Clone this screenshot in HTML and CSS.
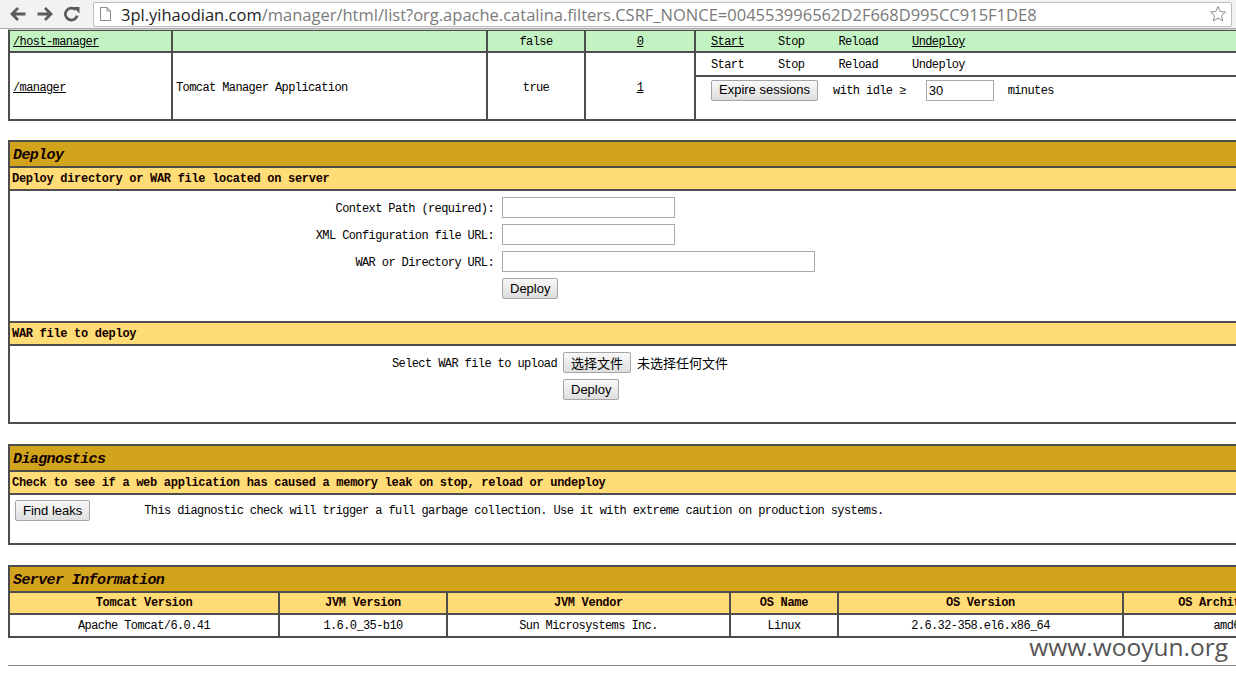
FILE: index.html
```html
<!DOCTYPE html>
<html lang="en">
<head>
<meta charset="utf-8">
<title>/manager</title>
<link rel="stylesheet" href="styles.css">
</head>
<body>
<div class="toolbar">
  <div class="nav">
    <svg class="navicon" width="18" height="16" viewBox="0 0 18 16"><path d="M16.5 8H3.5M9 2L3 8l6 6" stroke="#5b5b5b" stroke-width="2.8" fill="none"/></svg>
    <svg class="navicon" width="18" height="16" viewBox="0 0 18 16"><path d="M1.5 8h13M9 2l6 6-6 6" stroke="#5b5b5b" stroke-width="2.8" fill="none"/></svg>
    <svg class="navicon" width="18" height="16" viewBox="0 0 18 16"><path d="M14.2 9.6A6 6 0 1 1 12.6 3.8" stroke="#5b5b5b" stroke-width="2.7" fill="none"/><path d="M10 1h6.5v6.5z" fill="#5b5b5b"/></svg>
  </div>
  <div class="omnibox">
    <svg class="pageicon" width="13" height="16" viewBox="0 0 13 16"><path d="M1.5 1.5h6.5l3.5 3.5v9.5h-10z M8 1.5v3.5h3.5" stroke="#8a8a8a" stroke-width="1" fill="#fff"/></svg>
    <span class="url"><span class="host">3pl.yihaodian.com</span>/manager/html/list?org.apache.catalina.filters.CSRF_NONCE=004553996562D2F668D995CC915F1DE8</span>
    <svg class="star" width="18" height="18" viewBox="0 0 18 18"><path d="M9 1.5l2.2 5 5.3.5-4 3.6 1.2 5.3L9 13.1l-4.7 2.8 1.2-5.3-4-3.6 5.3-.5z" stroke="#8c8c8c" stroke-width="1" fill="none" stroke-linejoin="round"/></svg>
  </div>
</div>

<div class="page">
  <table class="grid apps">
    <colgroup><col class="a1"><col class="a2"><col class="a3"><col class="a4"><col></colgroup>
    <tr class="green">
      <td class="cell"><a class="lnk">/host-manager</a></td>
      <td class="cell"></td>
      <td class="cell center">false</td>
      <td class="cell center"><a class="lnk">0</a></td>
      <td class="cell cmds"><div class="cmdrow"><a class="lnk">Start</a><span>Stop</span><span>Reload</span><a class="lnk">Undeploy</a></div></td>
    </tr>
    <tr>
      <td class="cell span" rowspan="2"><a class="lnk">/manager</a></td>
      <td class="cell span" rowspan="2">Tomcat Manager Application</td>
      <td class="cell span center" rowspan="2">true</td>
      <td class="cell span center" rowspan="2"><a class="lnk">1</a></td>
      <td class="cell cmds tall"><div class="cmdrow"><span>Start</span><span>Stop</span><span>Reload</span><span>Undeploy</span></div></td>
    </tr>
    <tr>
      <td class="cell expire"><div class="expirerow"><button class="btn">Expire sessions</button><span class="idle">with idle ≥</span><input class="txt idlebox" value="30"><span class="mins">minutes</span></div></td>
    </tr>
  </table>

  <table class="grid box">
    <tr><td class="title">Deploy</td></tr>
    <tr><td class="subhead">Deploy directory or WAR file located on server</td></tr>
    <tr><td class="body deploybody">
      <div class="form">
        <span class="lbl">Context Path (required):</span><input class="txt">
        <span class="lbl">XML Configuration file URL:</span><input class="txt">
        <span class="lbl">WAR or Directory URL:</span><input class="txt wide">
        <span></span><button class="btn">Deploy</button>
      </div>
    </td></tr>
    <tr><td class="subhead">WAR file to deploy</td></tr>
    <tr><td class="body deploybody">
      <div class="form upload">
        <span class="lbl">Select WAR file to upload</span><span class="filepick"><button class="btn cjk">选择文件</button><span class="nofile">未选择任何文件</span></span>
        <span></span><button class="btn">Deploy</button>
      </div>
    </td></tr>
  </table>

  <table class="grid box">
    <tr><td class="title">Diagnostics</td></tr>
    <tr><td class="subhead">Check to see if a web application has caused a memory leak on stop, reload or undeploy</td></tr>
    <tr><td class="body diagbody">
      <div class="diagrow"><button class="btn">Find leaks</button><span class="diagtext">This diagnostic check will trigger a full garbage collection. Use it with extreme caution on production systems.</span></div>
    </td></tr>
  </table>

  <table class="grid box info">
    <colgroup><col class="s1"><col class="s2"><col class="s3"><col class="s4"><col class="s5"><col></colgroup>
    <tr><td class="title" colspan="6">Server Information</td></tr>
    <tr class="heads">
      <td>Tomcat Version</td><td>JVM Version</td><td>JVM Vendor</td><td>OS Name</td><td>OS Version</td><td>OS Architecture</td>
    </tr>
    <tr class="vals">
      <td>Apache Tomcat/6.0.41</td><td>1.6.0_35-b10</td><td>Sun Microsystems Inc.</td><td>Linux</td><td>2.6.32-358.el6.x86_64</td><td>amd64</td>
    </tr>
  </table>

  <hr class="rule">
</div>

<div class="watermark">www.wooyun.org</div>
</body>
</html>
```

FILE: styles.css
```css
html, body {
  margin: 0;
  padding: 0;
  overflow: hidden;
  background: #fff;
}

body {
  font-family: "Liberation Mono", "Noto Sans CJK SC", monospace;
  font-size: 12px;
  letter-spacing: -0.6px;
  color: #000;
}

/* ---------- browser toolbar ---------- */
.toolbar {
  height: 28px;
  border-bottom: 1px solid #a9a9a9;
  background: #f2f2f2;
  display: flex;
  align-items: center;
  letter-spacing: 0;
}

.nav {
  width: 93px;
  display: flex;
  align-items: center;
  padding-left: 9px;
  box-sizing: border-box;
  gap: 9px;
}

.navicon {
  display: block;
}

.omnibox {
  flex: 1;
  margin-right: 4px;
  height: 25px;
  box-sizing: border-box;
  border: 1px solid #bdbdbd;
  border-radius: 2px;
  background: #fff;
  display: flex;
  align-items: center;
  padding-left: 5px;
  padding-right: 4px;
}

.pageicon {
  display: block;
  flex: none;
}

.url {
  flex: 1;
  margin-left: 9px;
  font-family: "Open Sans", "Noto Sans", sans-serif;
  font-size: 16.5px;
  color: #7a7a7a;
  white-space: nowrap;
  letter-spacing: 0;
}

.host {
  color: #1e1e1e;
}

.star {
  display: block;
  flex: none;
}

/* ---------- page ---------- */
.page {
  width: 1330px;
  padding: 0 8px;
}

.grid {
  width: 100%;
  table-layout: fixed;
  border-collapse: separate;
  border-spacing: 0;
  border: 1px solid #4d4d4d;
}

.grid td {
  border: 1px solid #4d4d4d;
  padding: 0;
  vertical-align: middle;
}

.lnk {
  color: #000;
  text-decoration: underline;
}

.center {
  text-align: center;
}

/* applications table */
.apps {
  border-top-color: #cfcfcf;
}

.apps .a1 { width: 163px; }
.apps .a2 { width: 315px; }
.apps .a3 { width: 98px; }
.apps .a4 { width: 110px; }

.apps .cell {
  padding: 4px 3px 2px;
  line-height: 14px;
}

.apps .cell.span {
  padding-top: 5px;
  padding-bottom: 1px;
}

.green td {
  background: #c3f3c3;
}

.apps .cmds {
  padding-left: 15px;
}

.apps .cmds.tall {
  padding-top: 5px;
  padding-bottom: 3px;
}

.cmdrow {
  display: flex;
  gap: 34px;
}

.apps .expire {
  padding: 3px 0 19px 15px;
}

.expirerow {
  display: flex;
  align-items: center;
  height: 20px;
}

.idle {
  margin-left: 15px;
  padding-top: 1px;
}

.mins {
  margin-left: 14px;
  padding-top: 1px;
}

/* ---------- buttons / inputs ---------- */
.btn {
  height: 21px;
  box-sizing: border-box;
  padding: 0 7px;
  border: 1px solid #a5a5a5;
  border-radius: 2px;
  background: linear-gradient(#f8f8f8, #dedede);
  font-family: "Liberation Sans", Arial, sans-serif;
  font-size: 13px;
  line-height: 18px;
  color: #000;
  letter-spacing: 0;
  margin: 0;
}

.btn.cjk {
  font-family: "Noto Sans CJK SC", sans-serif;
  padding: 0 7px;
}

.txt {
  display: block;
  width: 173px;
  height: 21px;
  box-sizing: border-box;
  border: 1px solid #a9a9a9;
  padding: 1px 2px;
  margin: 0;
  font-family: "Liberation Sans", Arial, sans-serif;
  font-size: 13px;
  letter-spacing: 0;
  background: #fff;
}

.txt.wide {
  width: 313px;
}

.txt.idlebox {
  margin-left: 20px;
  width: 68px;
  height: 21px;
}

/* ---------- section boxes ---------- */
.box {
  margin-top: 19px;
}

.box + .box {
  margin-top: 20px;
}

.grid .title {
  background: #d2a41c;
  font-size: 15px;
  font-style: italic;
  font-weight: bold;
  line-height: 21px;
  padding: 3px 3px 0;
  letter-spacing: -0.6px;
  color: #120000;
}

.grid .subhead {
  background: #ffdc75;
  font-weight: bold;
  line-height: 20px;
  padding: 1px 2px 0;
  letter-spacing: -0.3px;
  color: #140000;
}

.grid .deploybody {
  padding: 6px 0 22px;
}

.form {
  display: grid;
  grid-template-columns: 486px auto;
  column-gap: 6px;
  row-gap: 6px;
  align-items: center;
  justify-items: start;
}

.lbl {
  justify-self: end;
  padding-right: 2px;
  padding-top: 2px;
}

.form.upload {
  grid-template-columns: 549px auto;
  column-gap: 4px;
}

.filepick {
  display: flex;
  align-items: center;
}

.nofile {
  margin-left: 6px;
  font-family: "Noto Sans CJK SC", sans-serif;
  font-size: 13px;
  letter-spacing: 0;
}

.grid .diagbody {
  padding: 5px 0 22px 5px;
}

.diagrow {
  display: flex;
  align-items: center;
}

.diagtext {
  margin-left: 54px;
  padding-top: 1px;
}

/* server information */
.info .s1 { width: 270px; }
.info .s2 { width: 168px; }
.info .s3 { width: 283px; }
.info .s4 { width: 108px; }
.info .s5 { width: 285px; }

.heads td {
  background: #ffdc75;
  font-weight: bold;
  text-align: center;
  line-height: 19px;
  padding-top: 1px !important;
  letter-spacing: -0.3px;
  color: #140000;
}

.vals td {
  text-align: center;
  line-height: 19px;
  padding-top: 2px !important;
}

.rule {
  border: 0;
  border-top: 1px solid #858585;
  height: 0;
  margin: 27px 0 0;
}

.watermark {
  position: absolute;
  right: 8px;
  top: 630px;
  font-family: "Open Sans", "Noto Sans", sans-serif;
  font-size: 24.5px;
  color: #555;
  letter-spacing: 0;
}
```
